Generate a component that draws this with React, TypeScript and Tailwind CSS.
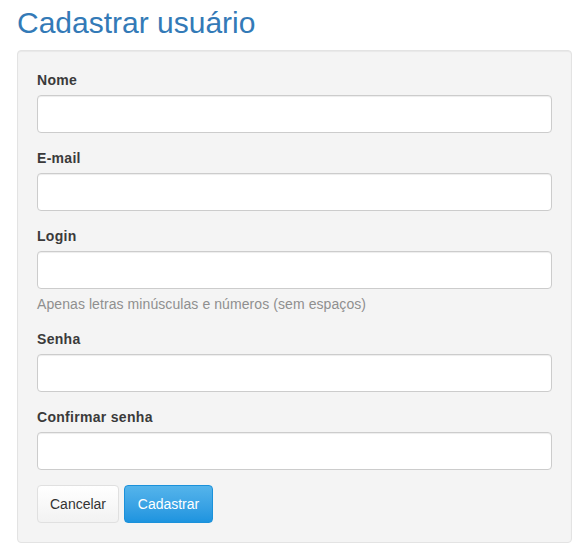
import React from "react";

const inputCls =
  "block w-full h-[38px] rounded-[4px] border border-[#cccccc] bg-white px-3 text-[14px] text-[#555] shadow-[inset_0_1px_1px_rgba(0,0,0,0.075)] outline-none";
const labelCls = "block h-[20px] leading-[20px] mb-[5px] text-[14px] font-bold tracking-[0.3px] text-[#3a3a3a]";

function Field({ label, help, type = "text" }: { label: string; help?: string; type?: string }) {
  return (
    <div className="mb-[15px]">
      <label className={labelCls}>{label}</label>
      <input type={type} className={inputCls} />
      {help && (
        <p className="mt-[5px] leading-[20px] text-[14px] tracking-[0.08px] text-[#8f8f8f]">{help}</p>
      )}
    </div>
  );
}

export default function App() {
  return (
    <div
      className="w-[583px] min-h-[551px] bg-white pl-[17px] pr-[11px] pt-[6px]"
      style={{ fontFamily: '"Liberation Sans", Arial, Helvetica, sans-serif' }}
    >
      <h2 className="text-[30px] leading-[33px] mb-[11px] text-[#337ab7] font-normal">
        Cadastrar usuário
      </h2>
      <div className="rounded-[4px] border border-[#e3e3e3] bg-[#f4f4f4] p-[19px] shadow-[inset_0_1px_1px_rgba(0,0,0,0.05)]">
        <Field label="Nome" />
        <Field label="E-mail" type="email" />
        <Field label="Login" help="Apenas letras minúsculas e números (sem espaços)" />
        <Field label="Senha" type="password" />
        <Field label="Confirmar senha" type="password" />
        <div className="flex gap-[5px]">
          <button className="h-[38px] w-[82px] rounded-[4px] border border-[#e0e0e0] bg-gradient-to-b from-white to-[#f2f2f2] text-[14px] text-[#333]">
            Cancelar
          </button>
          <button className="h-[38px] w-[89px] rounded-[4px] border border-[#1b91da] bg-gradient-to-b from-[#54b4eb] to-[#1d94df] text-[14px] text-white">
            Cadastrar
          </button>
        </div>
      </div>
    </div>
  );
}
